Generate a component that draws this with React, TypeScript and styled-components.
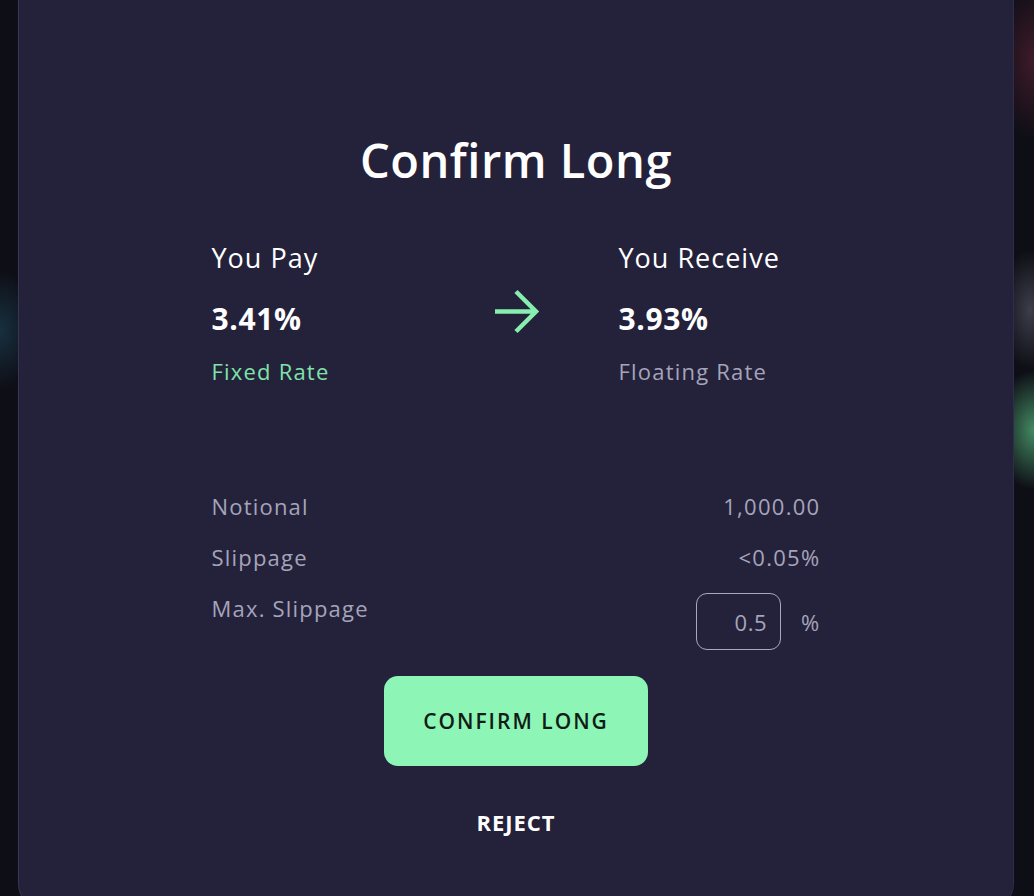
import React from "react";
import styled, { createGlobalStyle } from "styled-components";

const Global = createGlobalStyle`
  html, body { margin: 0; padding: 0; }
  body {
    background: #0e0e16;
    font-family: "Open Sans", "Noto Sans", sans-serif;
    width: 1034px;
    height: 896px;
    overflow: hidden;
  }
`;

const Backdrop = styled.div`
  position: relative;
  width: 1034px;
  height: 896px;
  overflow: hidden;
  background:
    radial-gradient(ellipse 30px 60px at 1030px 310px, rgba(120,120,140,0.45), transparent),
    radial-gradient(ellipse 40px 60px at 1034px 430px, rgba(90,190,130,0.7), transparent),
    radial-gradient(ellipse 40px 80px at 1034px 60px, rgba(110,40,60,0.5), transparent),
    radial-gradient(ellipse 40px 60px at 0px 330px, rgba(30,70,90,0.6), transparent),
    #0e0e16;
  display: flex;
  justify-content: center;
`;

const Modal = styled.div`
  margin-top: -40px;
  margin-right: 2px;
  width: 996px;
  height: 948px;
  background: #24223a;
  border-radius: 24px;
  box-shadow: inset 1px 0 0 rgba(120,110,170,0.25), inset -1px 0 0 rgba(120,110,170,0.15);
  display: flex;
  flex-direction: column;
  align-items: center;
  padding-top: 170px;
  box-sizing: border-box;
`;

const Title = styled.h1`
  margin: 0;
  color: #ffffff;
  font-size: 47px;
  font-weight: 600;
  line-height: 60px;
  letter-spacing: 0.5px;
`;

const Content = styled.div`
  width: 609px;
  margin-top: 50px;
  display: flex;
  flex-direction: column;
`;

const Swap = styled.div`
  display: grid;
  grid-template-columns: 268px 139px 1fr;
  align-items: start;
`;

const Side = styled.div`
  display: flex;
  flex-direction: column;
`;

const Label = styled.div`
  color: #ffffff;
  font-size: 27px;
  line-height: 36px;
  letter-spacing: 1px;
`;

const Rate = styled.div`
  color: #ffffff;
  font-size: 30px;
  font-weight: 700;
  line-height: 36px;
  margin-top: 25px;
  letter-spacing: 0.6px;
`;

const RateKind = styled.div<{ $accent?: boolean }>`
  color: ${(p) => (p.$accent ? "#7fe3ac" : "#a6a4bb")};
  font-size: 22px;
  line-height: 30px;
  margin-top: 19px;
  letter-spacing: 1.2px;
`;

const ArrowWrap = styled.div`
  padding-top: 48px;
  padding-left: 13px;
  display: flex;
`;

const Details = styled.div`
  margin-top: 105px;
  display: flex;
  flex-direction: column;
`;

const Row = styled.div`
  display: flex;
  justify-content: space-between;
  align-items: flex-start;
  height: 51px;
`;

const Key = styled.span`
  color: #a6a4bb;
  font-size: 22px;
  line-height: 30px;
  letter-spacing: 1.2px;
`;

const Value = styled.span`
  color: #a6a4bb;
  font-size: 22px;
  line-height: 30px;
  letter-spacing: 1.3px;
`;

const SlipControl = styled.div`
  display: flex;
  align-items: center;
  gap: 20px;
`;

const SlipInput = styled.div`
  width: 85px;
  height: 57px;
  box-sizing: border-box;
  border: 1.5px solid #a9a7bd;
  border-radius: 11px;
  display: flex;
  align-items: center;
  justify-content: flex-end;
  padding-right: 13px;
  color: #a6a4bb;
  font-size: 22px;
  letter-spacing: 0.5px;
`;

const Actions = styled.div`
  margin-top: 32px;
  display: flex;
  flex-direction: column;
  align-items: center;
`;

const ConfirmButton = styled.button`
  width: 264px;
  height: 90px;
  border: none;
  border-radius: 14px;
  background: #8df5b5;
  color: #0f1c16;
  font-family: inherit;
  font-size: 21px;
  font-weight: 600;
  letter-spacing: 2px;
  cursor: pointer;
`;

const RejectButton = styled.button`
  margin-top: 40px;
  background: none;
  border: none;
  color: #ffffff;
  font-family: inherit;
  font-size: 22px;
  font-weight: 700;
  letter-spacing: 1px;
  cursor: pointer;
`;

const Arrow = () => (
  <svg width="48" height="48" viewBox="0 0 48 48" fill="none">
    <path
      d="M2 23.5 H43 M23 3.5 L43 23.5 L23 43.5"
      stroke="#86eeae"
      strokeWidth="4.5"
      strokeLinecap="butt"
      strokeLinejoin="miter"
    />
  </svg>
);

export default function App() {
  return (
    <>
      <Global />
      <Backdrop>
        <Modal>
          <Title>Confirm Long</Title>
          <Content>
            <Swap>
              <Side>
                <Label>You Pay</Label>
                <Rate>3.41%</Rate>
                <RateKind $accent>Fixed Rate</RateKind>
              </Side>
              <ArrowWrap>
                <Arrow />
              </ArrowWrap>
              <Side>
                <Label>You Receive</Label>
                <Rate>3.93%</Rate>
                <RateKind>Floating Rate</RateKind>
              </Side>
            </Swap>
            <Details>
              <Row>
                <Key>Notional</Key>
                <Value>1,000.00</Value>
              </Row>
              <Row>
                <Key>Slippage</Key>
                <Value>&lt;0.05%</Value>
              </Row>
              <Row>
                <Key>Max. Slippage</Key>
                <SlipControl>
                  <SlipInput>0.5</SlipInput>
                  <Value>%</Value>
                </SlipControl>
              </Row>
            </Details>
          </Content>
          <Actions>
            <ConfirmButton>CONFIRM LONG</ConfirmButton>
            <RejectButton>REJECT</RejectButton>
          </Actions>
        </Modal>
      </Backdrop>
    </>
  );
}
